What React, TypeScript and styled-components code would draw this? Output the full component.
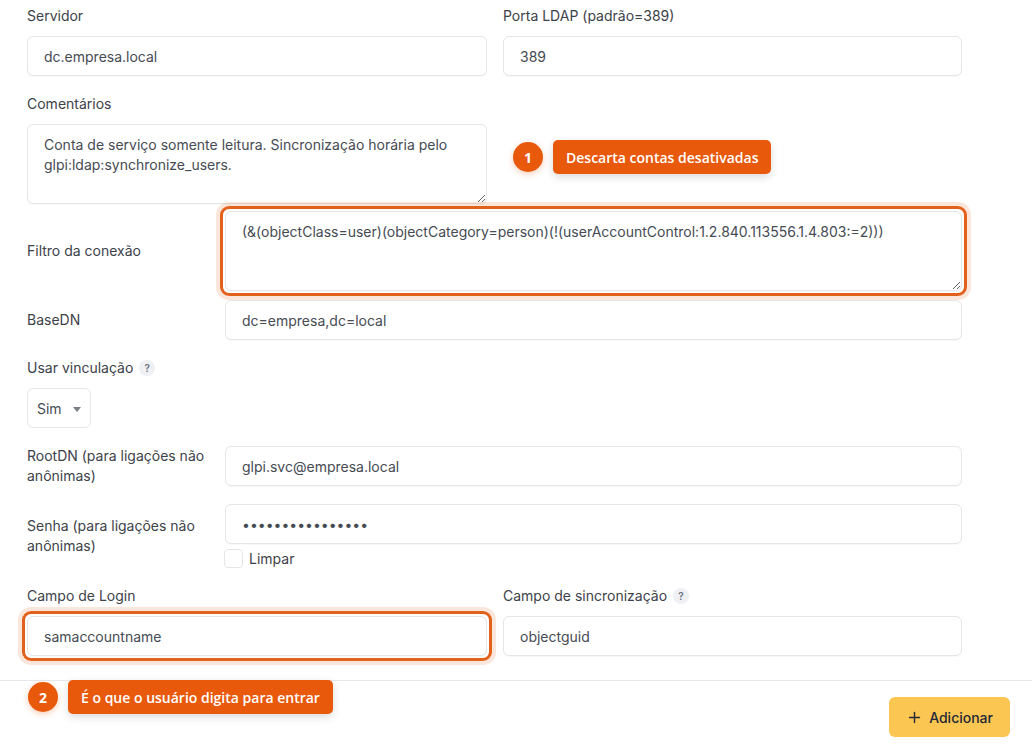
import React from "react";
import styled, { createGlobalStyle } from "styled-components";
import { Plus } from "lucide-react";

const GlobalStyle = createGlobalStyle`
  html, body { margin: 0; padding: 0; background: #ffffff; }
  body { font-family: Inter, "Noto Sans", "Liberation Sans", sans-serif; }
  * { box-sizing: border-box; }
`;

const Page = styled.div`
  position: relative;
  width: 1032px;
  height: 750px;
  overflow: hidden;
  background: #fff;
`;

const Form = styled.div`
  padding: 6px 70px 0 27px;
`;

const Grid2 = styled.div<{ $mt?: number }>`
  display: grid;
  grid-template-columns: 460px 459px;
  column-gap: 16px;
  margin-top: ${(p) => p.$mt ?? 0}px;
`;

const Field = styled.div<{ $mt?: number }>`
  display: flex;
  flex-direction: column;
  align-items: flex-start;
  gap: 10px;
  margin-top: ${(p) => p.$mt ?? 0}px;
`;

const HRow = styled.div<{ $mt?: number }>`
  display: grid;
  grid-template-columns: 198px 1fr;
  align-items: center;
  margin-top: ${(p) => p.$mt ?? 0}px;
`;

const Label = styled.label`
  display: flex;
  align-items: center;
  font-size: 14px;
  line-height: 20px;
  color: #3d4249;
`;

const SideLabel = styled(Label)`
  padding-right: 20px;
`;

const Help = styled.span`
  display: inline-flex;
  align-items: center;
  justify-content: center;
  width: 16px;
  height: 16px;
  margin-left: 6px;
  border-radius: 50%;
  background: #eef0f3;
  color: #6b7280;
  font-size: 10px;
  font-weight: 600;
`;

const inputBase = `
  width: 100%;
  border: 1px solid #e4e6e9;
  border-radius: 6px;
  background: #fff;
  font-family: Inter, "Noto Sans", "Liberation Sans", sans-serif;
  font-size: 14px;
  color: #464b53;
  outline: none;
  box-shadow: 0 1px 1px rgba(16, 24, 40, 0.03);
`;

const Input = styled.input`
  ${inputBase}
  height: 40px;
  padding: 0 16px;
`;

const TextArea = styled.textarea`
  ${inputBase}
  display: block;
  height: 80px;
  padding: 10px 16px;
  line-height: 20px;
  resize: vertical;
`;

const Highlight = styled.div`
  margin: -5px;
  padding: 2px;
  border: 3px solid #e2621d;
  border-radius: 9px;
  box-shadow: 0 0 0 4px rgba(232, 98, 30, 0.16);
  width: calc(100% + 10px);
`;

const Select = styled.div`
  display: flex;
  align-items: center;
  justify-content: space-between;
  width: 64px;
  height: 40px;
  padding: 0 9px 0 9px;
  border: 1px solid #e4e6e9;
  border-radius: 6px;
  font-size: 14px;
  color: #464b53;
`;

const Caret = styled.span`
  width: 0;
  height: 0;
  border-left: 4px solid transparent;
  border-right: 4px solid transparent;
  border-top: 5px solid #7a7f87;
  margin-top: 2px;
`;

const FieldCol = styled.div`
  display: flex;
  flex-direction: column;
  gap: 5px;
`;

const CheckRow = styled.div`
  display: flex;
  align-items: center;
  gap: 6px;
  margin-left: -1px;
  font-size: 14px;
  color: #3d4249;
`;

const CheckBox = styled.span`
  width: 19px;
  height: 19px;
  border: 1px solid #e4e6e9;
  border-radius: 4px;
  background: #fff;
`;

const Divider = styled.div`
  margin-top: 24px;
  height: 1px;
  background: #e6e8eb;
`;

const Footer = styled.div`
  display: flex;
  justify-content: flex-end;
  padding: 16px 22px 0 0;
`;

const AddButton = styled.button`
  display: inline-flex;
  align-items: center;
  gap: 6px;
  height: 40px;
  padding: 0 17px 0 17px;
  border: none;
  border-radius: 6px;
  background: #fcc653;
  color: #1f2937;
  font-family: Inter, "Noto Sans", sans-serif;
  font-size: 14px;
  font-weight: 500;
`;

const Callout = styled.div<{ $x: number; $y: number }>`
  position: absolute;
  left: ${(p) => p.$x}px;
  top: ${(p) => p.$y}px;
  display: flex;
  align-items: center;
  gap: 10px;
  font-family: "Open Sans", "Noto Sans", sans-serif;
`;

const Num = styled.span`
  display: flex;
  align-items: center;
  justify-content: center;
  width: 30px;
  height: 30px;
  border-radius: 50%;
  background: #e8590c;
  color: #fff;
  font-size: 14px;
  font-weight: 700;
  box-shadow: 0 2px 6px rgba(232, 89, 12, 0.3);
`;

const Pill = styled.span`
  display: flex;
  align-items: center;
  height: 34px;
  padding: 0 13px;
  border-radius: 5px;
  background: #e8590c;
  color: #fff;
  font-size: 14px;
  font-weight: 600;
  box-shadow: 0 3px 8px rgba(0, 0, 0, 0.15);
`;

export default function App() {
  return (
    <Page>
      <GlobalStyle />
      <Form>
        <Grid2>
          <Field>
            <Label>Servidor</Label>
            <Input readOnly value="dc.empresa.local" />
          </Field>
          <Field>
            <Label>Porta LDAP (padrão=389)</Label>
            <Input readOnly value="389" />
          </Field>
        </Grid2>

        <Grid2 $mt={18}>
          <Field>
            <Label>Comentários</Label>
            <TextArea
              readOnly
              value="Conta de serviço somente leitura. Sincronização horária pelo glpi:ldap:synchronize_users."
            />
          </Field>
        </Grid2>

        <HRow $mt={7}>
          <SideLabel>Filtro da conexão</SideLabel>
          <Highlight>
            <TextArea
              readOnly
              value="(&(objectClass=user)(objectCategory=person)(!(userAccountControl:1.2.840.113556.1.4.803:=2)))"
            />
          </Highlight>
        </HRow>

        <HRow $mt={9}>
          <SideLabel>BaseDN</SideLabel>
          <Input readOnly value="dc=empresa,dc=local" />
        </HRow>

        <Field $mt={18}>
          <Label>
            Usar vinculação<Help>?</Help>
          </Label>
          <Select>
            Sim
            <Caret />
          </Select>
        </Field>

        <HRow $mt={18}>
          <SideLabel>RootDN (para ligações não anônimas)</SideLabel>
          <Input readOnly value="glpi.svc@empresa.local" />
        </HRow>

        <HRow $mt={18}>
          <SideLabel>Senha (para ligações não anônimas)</SideLabel>
          <FieldCol>
            <Input readOnly type="password" value="xxxxxxxxxxxxxxxx" />
            <CheckRow>
              <CheckBox />
              Limpar
            </CheckRow>
          </FieldCol>
        </HRow>

        <Grid2 $mt={18}>
          <Field>
            <Label>Campo de Login</Label>
            <Highlight>
              <Input readOnly value="samaccountname" />
            </Highlight>
          </Field>
          <Field>
            <Label>
              Campo de sincronização<Help>?</Help>
            </Label>
            <Input readOnly value="objectguid" />
          </Field>
        </Grid2>
      </Form>

      <Divider />
      <Footer>
        <AddButton>
          <Plus size={17} strokeWidth={2} />
          Adicionar
        </AddButton>
      </Footer>

      <Callout $x={513} $y={140}>
        <Num>1</Num>
        <Pill>Descarta contas desativadas</Pill>
      </Callout>
      <Callout $x={28} $y={680}>
        <Num>2</Num>
        <Pill>É o que o usuário digita para entrar</Pill>
      </Callout>
    </Page>
  );
}
